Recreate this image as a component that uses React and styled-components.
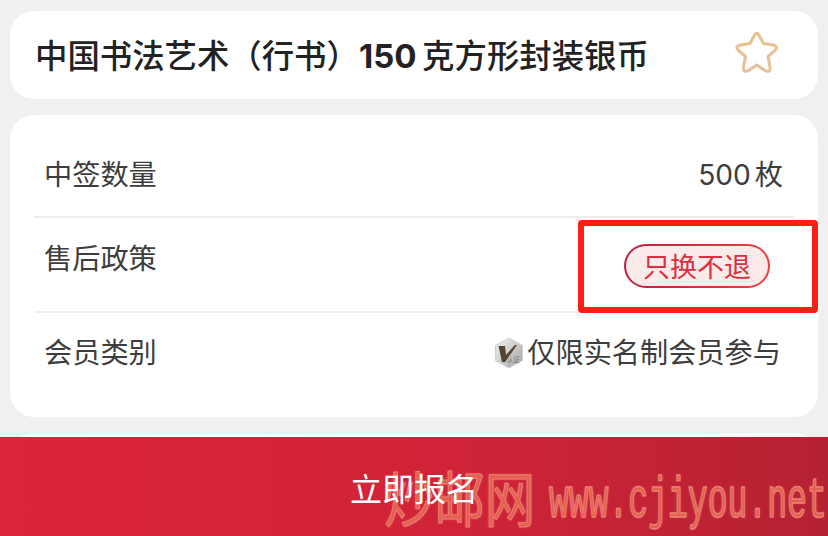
import React from "react";
import styled, { createGlobalStyle } from "styled-components";

const GlobalStyle = createGlobalStyle`
  html, body {
    margin: 0;
    padding: 0;
    background: #f0f0f0;
    overflow: hidden;
  }
`;

const Page = styled.div`
  position: relative;
  width: 828px;
  height: 536px;
  overflow: hidden;
  box-sizing: border-box;
  padding: 11px 10px 0;
  display: flex;
  flex-direction: column;
  gap: 16px;
  background: #f0f0f0;
  font-family: "Inter", "Noto Sans CJK SC", sans-serif;
`;

const TitleCard = styled.div`
  height: 88px;
  flex: none;
  box-sizing: border-box;
  padding: 0 38px 0 25px;
  display: flex;
  align-items: center;
  justify-content: space-between;
  background: #fff;
  border-radius: 24px;
`;

const Title = styled.div`
  font-size: 32.4px;
  font-weight: 500;
  color: #222;
  white-space: nowrap;
  word-spacing: -3px;
  margin-top: -3px;
`;

const TitleNumber = styled.span`
  font-weight: 700;
  font-size: 33px;
`;

const StarWrap = styled.div`
  display: flex;
  margin-bottom: 6px;
`;

const InfoCard = styled.div`
  height: 302px;
  flex: none;
  box-sizing: border-box;
  padding: 8px 24px 0;
  background: #fff;
  border-radius: 24px;
`;

const Row = styled.div`
  height: ${(props) => props.h}px;
  box-sizing: border-box;
  padding: ${(props) => props.top}px ${(props) => props.right}px 0 10px;
  display: flex;
  justify-content: space-between;
  align-items: flex-start;
  border-bottom: ${(props) => (props.last ? "none" : "2px solid #eeeeee")};
  font-size: 28.2px;
  line-height: 40px;
  color: #3d3d3d;
`;

const Value = styled.div`
  display: flex;
  align-items: center;
  white-space: pre;
  word-spacing: -4px;
`;

const Tag = styled.div`
  margin: 5px 0 0 0;
  width: 146px;
  height: 44px;
  box-sizing: border-box;
  border: 2px solid transparent;
  border-radius: 22px;
  background:
    linear-gradient(#fbeaea, #fbeaea) padding-box,
    linear-gradient(90deg, #bf1f42 0%, #d92c3f 50%, #ef3f3f 100%) border-box;
  color: #dc3040;
  font-size: 27px;
  line-height: 43px;
  text-align: center;
`;

const NextCard = styled.div`
  flex: 1;
  background: #fff;
  border-radius: 24px;
`;

const FooterButton = styled.div`
  position: absolute;
  left: 0;
  right: 0;
  bottom: 0;
  height: 99px;
  display: flex;
  align-items: center;
  justify-content: center;
  background: linear-gradient(90deg, #dc2439 0%, #d02337 55%, #b52233 100%);
`;

const ButtonLabel = styled.span`
  position: relative;
  z-index: 2;
  color: #fff;
  font-size: 32px;
`;

const Highlight = styled.div`
  position: absolute;
  left: 578px;
  top: 220px;
  width: 240px;
  height: 93px;
  box-sizing: border-box;
  border: 6px solid #fb1f14;
  border-radius: 4px;
`;

const Watermark = styled.div`
  position: absolute;
  left: ${(props) => props.x}px;
  top: ${(props) => props.y}px;
  font-family: ${(props) => props.font};
  font-size: ${(props) => props.size}px;
  line-height: 1;
  color: #e4604f;
  -webkit-text-stroke: ${(props) => props.stroke}px rgba(236, 130, 118, 0.95);
  text-shadow: 0 0 3px rgba(255, 200, 190, 0.45);
  white-space: nowrap;
  transform-origin: left top;
  transform: scale(${(props) => props.sx}, 1);
`;

const StarIcon = () => (
  <svg width="46" height="46" viewBox="0 0 46 46" fill="none">
    <defs>
      <linearGradient id="star" x1="0" y1="0" x2="0" y2="1">
        <stop offset="0" stopColor="#e9c08f" />
        <stop offset="1" stopColor="#e6c097" />
      </linearGradient>
    </defs>
    <path
      d="M20 7 Q22.7 1.5 25.4 7 L29.5 14.5 L39 16 Q45 17.5 41 21.5 L34 27.5 L36 38 Q36.5 44.5 31 41.5 L22.7 36 L14.5 41.5 Q9 44.5 9.5 38 L11.5 27.5 L4.5 21.5 Q0.5 17.5 6.5 16 L16 14.5 Z"
      stroke="url(#star)"
      strokeWidth="3"
      strokeLinejoin="round"
    />
  </svg>
);

const BadgeIcon = () => (
  <svg width="30" height="32" viewBox="0 0 30 32" style={{ marginRight: 3 }}>
    <defs>
      <linearGradient id="hex" x1="0" y1="0" x2="1" y2="1">
        <stop offset="0" stopColor="#f2f2f2" />
        <stop offset="1" stopColor="#a5a5a5" />
      </linearGradient>
    </defs>
    <path
      d="M15 1 L28.5 8.5 L28.5 23.5 L15 31 L1.5 23.5 L1.5 8.5 Z"
      fill="url(#hex)"
      stroke="#cfcfcf"
      strokeLinejoin="round"
    />
    <path d="M4.5 9 L11 9 L12 18 L21 8 L23 8 L11 25 L8 25 Z" fill="#54442d" />
    <text x="12.5" y="25" fontSize="6.5" fill="#857660">
      认证
    </text>
  </svg>
);

export default function App() {
  return (
    <Page>
      <GlobalStyle />
      <TitleCard>
        <Title>
          中国书法艺术（行书）<TitleNumber>150</TitleNumber> 克方形封装银币
        </Title>
        <StarWrap>
          <StarIcon />
        </StarWrap>
      </TitleCard>
      <InfoCard>
        <Row h={95} top={32} right={11}>
          <span>中签数量</span>
          <Value>500 枚</Value>
        </Row>
        <Row h={95} top={21} right={24}>
          <span>售后政策</span>
          <Tag>只换不退</Tag>
        </Row>
        <Row h={100} top={20} right={13} last>
          <span>会员类别</span>
          <Value>
            <BadgeIcon />
            仅限实名制会员参与
          </Value>
        </Row>
      </InfoCard>
      <NextCard />
      <FooterButton>
        <ButtonLabel>立即报名</ButtonLabel>
      </FooterButton>
      <Highlight />
      <Watermark x={384} y={466} size={60} sx={0.84} stroke={1} font={'"Noto Sans CJK SC", sans-serif'}>
        炒邮网
      </Watermark>
      <Watermark x={549} y={474} size={57} sx={0.58} stroke={1.5} font={'"Liberation Mono", monospace'}>
        www.cjiyou.net
      </Watermark>
    </Page>
  );
}
